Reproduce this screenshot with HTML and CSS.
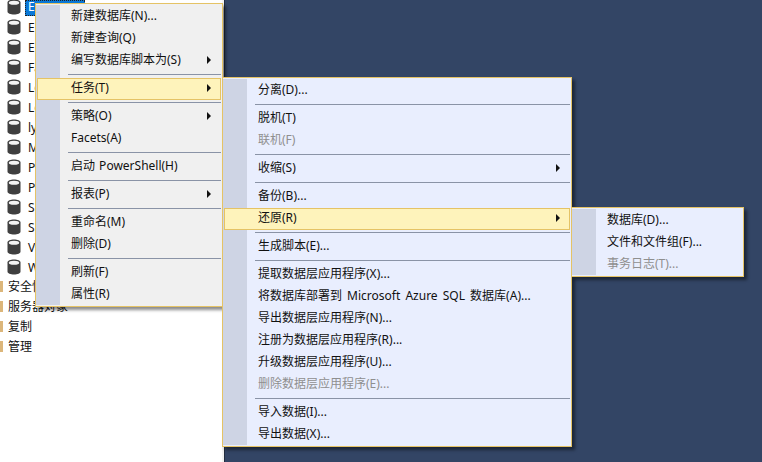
FILE: index.html
```html
<!DOCTYPE html>
<html lang="zh-CN">
<head>
  <meta charset="UTF-8" />
  <title>任务菜单</title>
  <link rel="stylesheet" href="styles.css">
</head>
<body>
  <svg class="defs" width="0" height="0">
    <symbol id="db" viewBox="0 0 14 16">
      <path d="M.5 3.500C.5 1.500 3.400.5 7 .5s6.500 1 6.500 3v9c0 2-2.900 3-6.500 3s-6.500-1-6.500-3z" fill="#3f3f3f"/>
      <ellipse cx="7" cy="3.700" rx="5.200" ry="2" fill="#f4f4f4"/>
    </symbol>
  </svg>

  <div class="tree">
    <div class="node"><svg class="db"><use href="#db"/></svg><span class="sel">E</span></div>
    <div class="node"><svg class="db"><use href="#db"/></svg><span>E</span></div>
    <div class="node"><svg class="db"><use href="#db"/></svg><span>E</span></div>
    <div class="node"><svg class="db"><use href="#db"/></svg><span>Fa</span></div>
    <div class="node"><svg class="db"><use href="#db"/></svg><span>Lo</span></div>
    <div class="node"><svg class="db"><use href="#db"/></svg><span>Lo</span></div>
    <div class="node"><svg class="db"><use href="#db"/></svg><span>ly</span></div>
    <div class="node"><svg class="db"><use href="#db"/></svg><span>M</span></div>
    <div class="node"><svg class="db"><use href="#db"/></svg><span>P</span></div>
    <div class="node"><svg class="db"><use href="#db"/></svg><span>P</span></div>
    <div class="node"><svg class="db"><use href="#db"/></svg><span>S</span></div>
    <div class="node"><svg class="db"><use href="#db"/></svg><span>S</span></div>
    <div class="node"><svg class="db"><use href="#db"/></svg><span>V</span></div>
    <div class="node"><svg class="db"><use href="#db"/></svg><span>W</span></div>
    <div class="node top"><i class="folder"></i><span>安全性</span></div>
    <div class="node top"><i class="folder"></i><span>服务器对象</span></div>
    <div class="node top"><i class="folder"></i><span>复制</span></div>
    <div class="node top"><i class="folder"></i><span>管理</span></div>
  </div>
  <div class="splitter"></div>

  <div class="menu menu-main">
    <div class="item">新建数据库(N)...</div>
    <div class="item">新建查询(Q)</div>
    <div class="item arrow">编写数据库脚本为(S)</div>
    <div class="sep"></div>
    <div class="item arrow on">任务(T)</div>
    <div class="sep"></div>
    <div class="item arrow">策略(O)</div>
    <div class="item">Facets(A)</div>
    <div class="sep"></div>
    <div class="item wide">启动 PowerShell(H)</div>
    <div class="sep"></div>
    <div class="item arrow">报表(P)</div>
    <div class="sep"></div>
    <div class="item">重命名(M)</div>
    <div class="item">删除(D)</div>
    <div class="sep"></div>
    <div class="item">刷新(F)</div>
    <div class="item">属性(R)</div>
  </div>

  <div class="menu menu-tasks">
    <div class="item">分离(D)...</div>
    <div class="sep"></div>
    <div class="item">脱机(T)</div>
    <div class="item off">联机(F)</div>
    <div class="sep"></div>
    <div class="item arrow">收缩(S)</div>
    <div class="sep"></div>
    <div class="item">备份(B)...</div>
    <div class="item arrow on">还原(R)</div>
    <div class="sep"></div>
    <div class="item">生成脚本(E)...</div>
    <div class="sep"></div>
    <div class="item">提取数据层应用程序(X)...</div>
    <div class="item wider">将数据库部署到 Microsoft Azure SQL 数据库(A)...</div>
    <div class="item">导出数据层应用程序(N)...</div>
    <div class="item">注册为数据层应用程序(R)...</div>
    <div class="item">升级数据层应用程序(U)...</div>
    <div class="item off">删除数据层应用程序(E)...</div>
    <div class="sep"></div>
    <div class="item">导入数据(I)...</div>
    <div class="item">导出数据(X)...</div>
  </div>

  <div class="menu menu-restore">
    <div class="item">数据库(D)...</div>
    <div class="item">文件和文件组(F)...</div>
    <div class="item off">事务日志(T)...</div>
  </div>
</body>
</html>
```
FILE: styles.css
```css
*,*::before,*::after{box-sizing:border-box;margin:0;padding:0}
html,body{height:100%;overflow:hidden}
body{position:relative;display:flex;background:#334565;font-family:"Noto Sans","Noto Sans CJK SC",sans-serif;font-size:12px;color:#111}
.defs{position:absolute}

/* object explorer behind the menus */
.tree{width:222px;background:#fff}
.node{height:20px;display:flex;align-items:center;gap:4px;padding-left:7px;white-space:nowrap}
.node:first-child{height:17px;padding-bottom:3px}
.node span{padding-left:3px}
.node.top{padding-left:0;gap:2px}
.node:not(.top)+.top{margin-top:-1px}
.db{width:14px;height:16px;flex:none}
.sel{background:#0a78d7;color:#fff;width:60px;height:16px;line-height:14px;align-self:flex-start;outline:1px dotted #222;outline-offset:-1px}
.folder{width:3px;height:11px;background:#dcb67a}
.splitter{width:2px;background:#f2f2f2;box-shadow:1px 0 0 #222d3f}

/* context menus */
.menu{position:absolute;padding:2px 1px;border:1px solid #e5c365;background:linear-gradient(#ced4e4,#ced4e4) 0 1px/24px calc(100% - 2px) no-repeat,var(--bg);box-shadow:3px 3px 3px rgba(0,0,0,.45)}
.menu-main{--bg:#f0f0f0;left:35px;top:3px;width:188px;height:304px}
.menu-tasks{--bg:#e9eefe;left:222px;top:77px;width:350px;height:370px}
.menu-restore{--bg:#e9eefe;left:571px;top:207px;width:173px;height:70px}
.item{position:relative;height:22px;line-height:18px;padding-left:33px;border:1px solid transparent;white-space:nowrap}
.item.on{background:#fef3bb;border-color:#e5c365}
.item.off{color:#8f8f8f}
.item.wide{word-spacing:1px}
.item.wider{word-spacing:2px}
.item.arrow::after{content:"";position:absolute;right:9px;top:5px;border-left:4px solid #111;border-top:4px solid transparent;border-bottom:4px solid transparent}
.sep{height:1px;margin:2px 0 3px 31px;background:#8a93a6}
```
